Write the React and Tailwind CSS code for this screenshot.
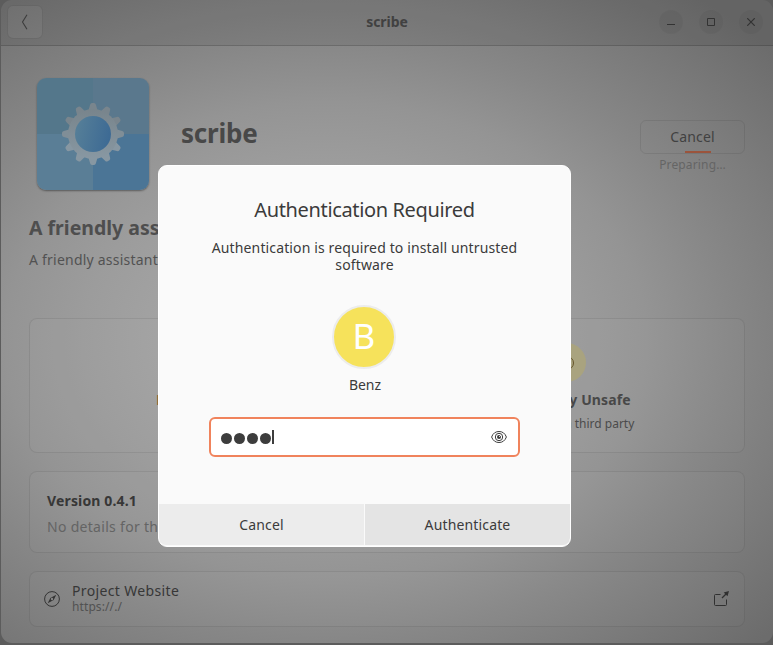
import React from 'react';

function Gear() {
  const teeth = Array.from({ length: 12 }, (_, i) => i * 30);
  return (
    <svg viewBox="0 0 112 112" className="block h-28 w-28">
      <defs>
        <linearGradient id="hole" x1="0" y1="0.3" x2="1" y2="0.5">
          <stop offset="0" stopColor="#567f98" />
          <stop offset="1" stopColor="#3d6a94" />
        </linearGradient>
        <linearGradient id="ring" gradientUnits="userSpaceOnUse" x1="56" y1="25" x2="56" y2="87">
          <stop offset="0" stopColor="#768289" />
          <stop offset="1" stopColor="#8a9aa5" />
        </linearGradient>
      </defs>
      <g>
        {teeth.map((a) => (
          <path
            key={a}
            transform={`rotate(${a} 56 56)`}
            d="M51 34 L53.1 26.8 Q53.5 25 55 25 H57 Q58.5 25 58.9 26.8 L61 34 Z"
            fill={a > 90 && a < 270 ? '#8797a2' : a === 90 || a === 270 ? '#808e97' : '#79858d'}
          />
        ))}
        <circle cx="56" cy="56" r="25" fill="url(#ring)" />
      </g>
      <circle cx="56" cy="56" r="18" fill="url(#hole)" />
    </svg>
  );
}

function HeaderBar() {
  return (
    <header className="flex h-[46px] shrink-0 items-center justify-between border-b border-black/15 bg-black/[0.07] pr-[10px] pl-[6px]">
      <div className="mb-px flex h-[34px] w-[36px] items-center justify-center rounded-md border border-black/10 bg-white/5">
        <svg width="8" height="16" viewBox="0 0 8 16" fill="none" stroke="#3c3c3c" strokeWidth="1.1">
          <path d="M6 .8 1.5 8 6 15.2" />
        </svg>
      </div>
      <div className="mb-0.5 ml-[72px] text-[14px] font-bold tracking-[-0.05px] text-[#414141]">scribe</div>
      <div className="mb-px flex gap-4">
        <div className="flex h-6 w-6 items-center justify-center rounded-full bg-black/[0.04]">
          <svg width="8" height="8" viewBox="0 0 8 8"><path d="M0 6.5h8" stroke="#333" /></svg>
        </div>
        <div className="flex h-6 w-6 items-center justify-center rounded-full bg-black/[0.04]">
          <svg width="8" height="8" viewBox="0 0 8 8"><path d="M.5 .5h7v7h-7z" fill="none" stroke="#333" /></svg>
        </div>
        <div className="flex h-6 w-6 items-center justify-center rounded-full bg-black/[0.04]">
          <svg width="8" height="8" viewBox="0 0 8 8"><path d="M.2 .2 7.8 7.8M7.8 .2.2 7.8" stroke="#333" strokeWidth="1.2" /></svg>
        </div>
      </div>
    </header>
  );
}

function Dialog() {
  return (
    <section className="absolute top-[165px] left-[158px] flex h-[382px] w-[413px] flex-col items-center overflow-hidden rounded-[9px] border border-white bg-[#fafafa] text-[#3b3b3b]">
      <h2 className="mt-[30px] text-[20px] leading-7 tracking-[-0.36px] whitespace-nowrap">Authentication Required</h2>
      <p className="mt-[15px] text-center text-[14px] leading-[17px] tracking-[0.13px] whitespace-nowrap">
        Authentication is required to install untrusted
        <br />
        software
      </p>
      <div className="mt-[32px] mr-px flex h-16 w-16 items-center justify-center rounded-full border-2 border-[#ececec] bg-[#f6e25b] text-[35px] leading-none text-white">
        <span className="mb-[3px]">B</span>
      </div>
      <div className="mt-[6px] ml-px text-[14px] leading-5">Benz</div>
      <div className="mt-[22px] flex h-[40px] w-[311px] shrink-0 items-center justify-between rounded-md border-2 border-[#f0835c] bg-white pr-[11px] pl-[10px]">
        <div className="flex items-center gap-0.5">
          <i className="mt-0.5 h-[11px] w-[11px] rounded-full bg-[#3d3d3d]" />
          <i className="mt-0.5 h-[11px] w-[11px] rounded-full bg-[#3d3d3d]" />
          <i className="mt-0.5 h-[11px] w-[11px] rounded-full bg-[#3d3d3d]" />
          <i className="mt-0.5 h-[11px] w-[11px] rounded-full bg-[#3d3d3d]" />
          <i className="-ml-px h-[14px] w-0.5 bg-[#3d3d3d]" />
        </div>
        <svg width="16" height="14" viewBox="0 0 16 14" fill="none" stroke="#3d3d3d">
          <path d="M.6 7C2 3.200 4.700 1.500 8 1.500S14 3.200 15.400 7C14 10.800 11.300 12.500 8 12.500S2 10.800.6 7Z" />
          <circle cx="8" cy="7" r="3.700" />
          <circle cx="8" cy="7" r="2" fill="#3d3d3d" stroke="none" />
          <path d="M8.200 6.800 9.800 5.200" stroke="#fff" />
        </svg>
      </div>
      <div className="mt-auto mb-px flex h-[41px] w-full shrink-0 gap-px text-[14px] tracking-[0.15px]">
        <div className="flex flex-1 items-center justify-center rounded-bl-[7px] bg-[#ececec]">Cancel</div>
        <div className="flex flex-1 items-center justify-center rounded-br-[7px] bg-[#e4e4e4]">Authenticate</div>
      </div>
    </section>
  );
}

export default function App() {
  return (
    <div className="relative h-[645px] w-[773px] overflow-hidden bg-[#5c5c5c] pb-[2px] pl-px font-['Noto_Sans',sans-serif]">
      <div className="flex h-[643px] w-[772px] flex-col overflow-hidden rounded-[11px] bg-[radial-gradient(ellipse_594px_440px_at_325px_340px,#b0b0b0_0%,#9c9c9c_41%,#949494_54%,#878787_68%,#6c6c6c_100%)]">
        <HeaderBar />
        <main className="flex flex-col px-7">
          <div className="mt-[32px] flex h-[112px] items-center pl-2">
            <div className="relative h-28 w-28 shrink-0 overflow-hidden rounded-[9px] bg-[conic-gradient(#5a788d_0_25%,#4b7596_25%_50%,#5a7e96_50%_75%,#54778b_75%)] shadow-[0_1px_2px_rgba(0,0,0,0.4)]">
              <Gear />
            </div>
            <h1 className="mb-0.5 ml-8 flex-1 text-[26px] leading-9 font-bold tracking-[-0.2px] text-[#484848]">scribe</h1>
            <div className="mt-[26px] flex w-[105px] flex-col items-center">
              <div className="relative flex h-[34px] w-[105px] items-center justify-center rounded-md border border-black/[0.08] text-[14px] tracking-[0.15px] text-[#414141]">
                Cancel
                <span className="absolute bottom-0 left-[44px] h-0.5 w-[26px] bg-[#9b543c]" />
              </div>
              <div className="mt-px text-[12px] leading-5 tracking-[0.15px] text-[#656565]">Preparing…</div>
            </div>
          </div>
          <h2 className="mt-[24px] text-[19.5px] leading-7 font-bold whitespace-nowrap text-[#4e4e4e]">A friendly assistant</h2>
          <p className="mt-[8px] text-[14px] leading-5 tracking-[0.22px] whitespace-nowrap text-[#525252]">A friendly assistant</p>
          <section className="mt-[48px] flex h-[135px] rounded-lg border border-black/[0.08] bg-white/[0.02]">
            <div className="flex flex-1 flex-col items-center pt-6">
              <div className="h-[39px] w-[39px]" />
              <div className="mt-[8px] w-[105px] text-[14px] leading-5 font-bold text-[#806036]">High Risk</div>
            </div>
            <div className="flex flex-1 flex-col items-center pt-6">
              <div className="ml-px flex h-[39px] w-[39px] items-center justify-center rounded-full bg-[#a9a37f]">
                <svg width="18" height="18" viewBox="0 0 18 18" fill="none" stroke="#65552b"><circle cx="10" cy="9" r="6.500" /></svg>
              </div>
              <div className="mt-[8px] text-[14px] leading-5 font-bold tracking-[0.1px] whitespace-nowrap text-[#484848]">Potentially Unsafe</div>
              <div className="mt-[4px] mr-px text-[12px] leading-5 whitespace-nowrap text-[#4b4b4b]">Provided by a third party</div>
            </div>
          </section>
          <section className="mt-[18px] flex h-[82px] flex-col rounded-lg border border-black/[0.08] bg-white/[0.02] px-[17px] pt-[19px]">
            <h3 className="text-[14px] leading-5 font-bold tracking-[0.15px] text-[#373737]">Version 0.4.1</h3>
            <p className="mt-[6px] text-[14px] leading-5 tracking-[0.3px] text-[#646464]">No details for this release</p>
          </section>
          <section className="mt-[18px] flex h-[56px] items-center rounded-lg border border-black/[0.08] bg-white/[0.02] pr-[15px] pl-[14px]">
            <svg width="16" height="16" viewBox="0 0 16 16" fill="none" stroke="#343434">
              <circle cx="8" cy="8" r="7.400" />
              <path fillRule="evenodd" fill="#343434" stroke="none" d="M12.3 3.7 9.7 9.1 3.7 12.3 6.3 6.9ZM8 6.8a1.2 1.2 0 1 0 0 2.4 1.2 1.2 0 0 0 0-2.4Z" />
            </svg>
            <div className="ml-[12px] flex-1">
              <div className="text-[14px] leading-4 tracking-[0.35px] text-[#373737]">Project Website</div>
              <div className="text-[12px] leading-4 tracking-[0.1px] text-[#525252]">https://./</div>
            </div>
            <svg width="16" height="16" viewBox="0 0 16 16" fill="none" stroke="#303030">
              <path d="M7.500 3.500h-5A1 1 0 0 0 1.500 4.500v9a1 1 0 0 0 1 1h10a1 1 0 0 0 1-1v-5" />
              <path d="m9 7 4-4" strokeWidth="1.3" />
              <path d="M10.700 1.500 16 0l-1.500 5.300Z" fill="#303030" stroke="none" />
            </svg>
          </section>
        </main>
      </div>
      <Dialog />
    </div>
  );
}
